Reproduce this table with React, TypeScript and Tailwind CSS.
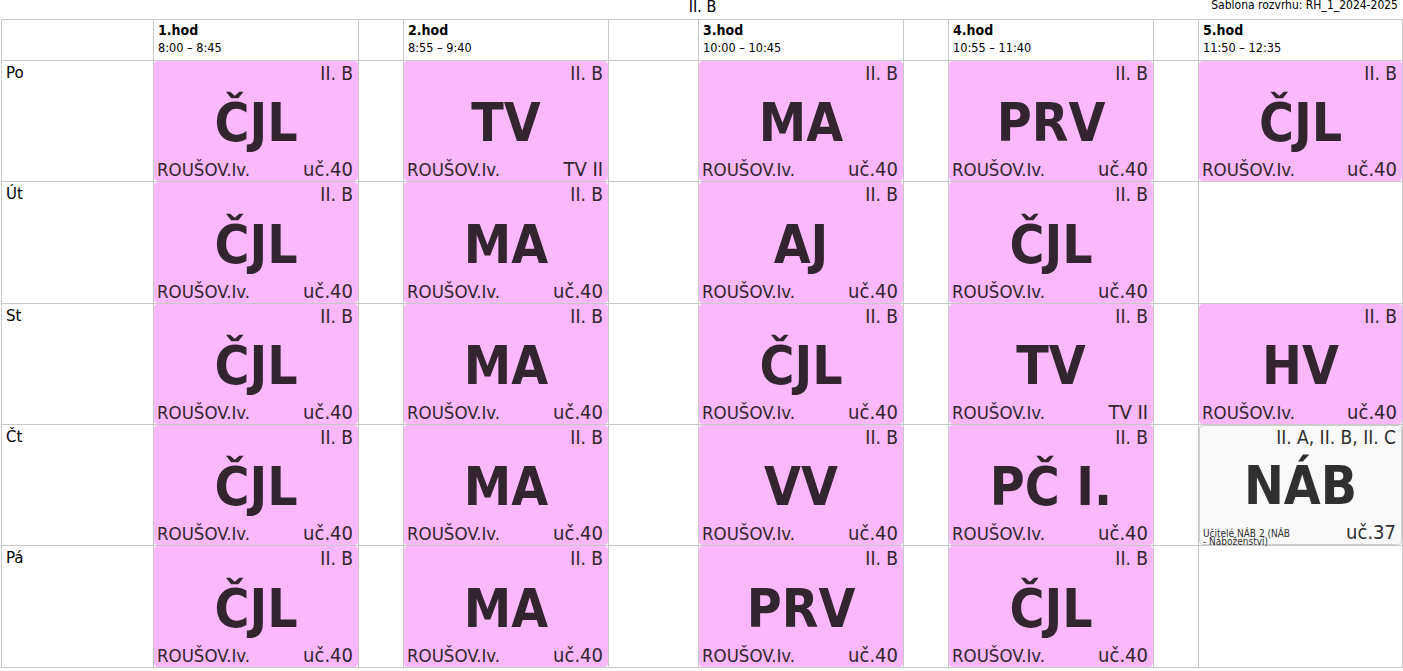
import React from "react";

type Lesson = {
  subj: string;
  teacher: string;
  room: string;
  special?: boolean;
} | null;

const COND = "font-['DejaVu_Sans_Condensed','DejaVu_Sans',sans-serif] font-stretch-condensed";

const mk = (subj: string, room = "uč.40"): Lesson => ({ subj, teacher: "ROUŠOV.Iv.", room });

const days: { name: string; lessons: Lesson[] }[] = [
  { name: "Po", lessons: [mk("ČJL"), mk("TV", "TV II"), mk("MA"), mk("PRV"), mk("ČJL")] },
  { name: "Út", lessons: [mk("ČJL"), mk("MA"), mk("AJ"), mk("ČJL"), null] },
  { name: "St", lessons: [mk("ČJL"), mk("MA"), mk("ČJL"), mk("TV", "TV II"), mk("HV")] },
  {
    name: "Čt",
    lessons: [
      mk("ČJL"),
      mk("MA"),
      mk("VV"),
      mk("PČ I."),
      { subj: "NÁB", teacher: "Učitelé NÁB 2  (NÁB - Náboženství)", room: "uč.37", special: true },
    ],
  },
  { name: "Pá", lessons: [mk("ČJL"), mk("MA"), mk("PRV"), mk("ČJL"), null] },
];

const hours = [
  { n: "1.hod", t: "8:00 – 8:45" },
  { n: "2.hod", t: "8:55 – 9:40" },
  { n: "3.hod", t: "10:00 – 10:45" },
  { n: "4.hod", t: "10:55 – 11:40" },
  { n: "5.hod", t: "11:50 – 12:35" },
];

function Card({ l }: { l: NonNullable<Lesson> }) {
  if (l.special) {
    return (
      <div className={`h-full w-full rounded-[4px] border border-[#cfcfcf] bg-[#f9f9f9] text-[#303030] flex flex-col ${COND}`}>
        <div className="text-right pr-[5px] text-[19px] leading-[22px]">II. A, II. B, II. C</div>
        <div className="flex-1 flex items-center justify-center pt-[2px]">
          <span className="font-bold text-[53px] leading-none">{l.subj}</span>
        </div>
        <div className="flex items-end justify-between h-[24px]">
          <div className="w-[96px] pl-[3px] text-[10px] leading-[8px] translate-y-[2px]">{l.teacher}</div>
          <div className="pr-[5px] text-[20px] leading-[24px]">{l.room}</div>
        </div>
      </div>
    );
  }
  return (
    <div className={`h-full w-full rounded-[4px] bg-[#fbb8fb] text-[#33252f] flex flex-col ${COND}`}>
      <div className="text-right pr-[5px] pt-px text-[19px] leading-[22px]">II. B</div>
      <div className="flex-1 flex items-center justify-center pt-[4px]">
        <span className="font-bold text-[53px] leading-none">{l.subj}</span>
      </div>
      <div className="flex items-baseline justify-between h-[24px]">
        <span className="pl-[3px] text-[18.5px] leading-[24px]">{l.teacher}</span>
        <span className="pr-[5px] text-[20px] leading-[24px]">{l.room}</span>
      </div>
    </div>
  );
}

export default function App() {
  return (
    <div className="w-[1403px] h-[671px] bg-white overflow-hidden text-black">
      <div className={`h-[19px] grid grid-cols-[1fr_auto_1fr] ${COND}`}>
        <div />
        <div className="text-[16px] leading-[14px] pl-[2px]">II. B</div>
        <div className="justify-self-end pr-[5px] text-[12px] leading-[11px]">Šablona rozvrhu: RH_1_2024-2025</div>
      </div>
      <div className="ml-px w-[1402px] border-l border-t border-[#c8c8c8] grid grid-cols-[152px_205px_45px_205px_90px_205px_45px_205px_45px_204px] grid-rows-[41px_121px_122px_121px_121px_122px]">
        <div className="border-r border-b border-[#c8c8c8]" />
        {hours.map((h, i) => (
          <React.Fragment key={h.n}>
            <div className={`border-r border-b border-[#c8c8c8] pl-[4px] ${COND}`}>
              <div className="font-bold text-[14px] leading-[16px] pt-[2px]">{h.n}</div>
              <div className="text-[12.6px] leading-[20px]">{h.t}</div>
            </div>
            {i < 4 && <div className="border-r border-b border-[#c8c8c8]" />}
          </React.Fragment>
        ))}
        {days.map((d) => (
          <React.Fragment key={d.name}>
            <div className="border-r border-b border-[#c8c8c8] pl-[4px] pt-[3px] font-['DejaVu_Sans',sans-serif] text-[15px] leading-[18px]">
              {d.name}
            </div>
            {d.lessons.map((l, i) => (
              <React.Fragment key={i}>
                <div className="border-r border-b border-[#c8c8c8]">{l && <Card l={l} />}</div>
                {i < 4 && <div className="border-r border-b border-[#c8c8c8]" />}
              </React.Fragment>
            ))}
          </React.Fragment>
        ))}
      </div>
    </div>
  );
}
